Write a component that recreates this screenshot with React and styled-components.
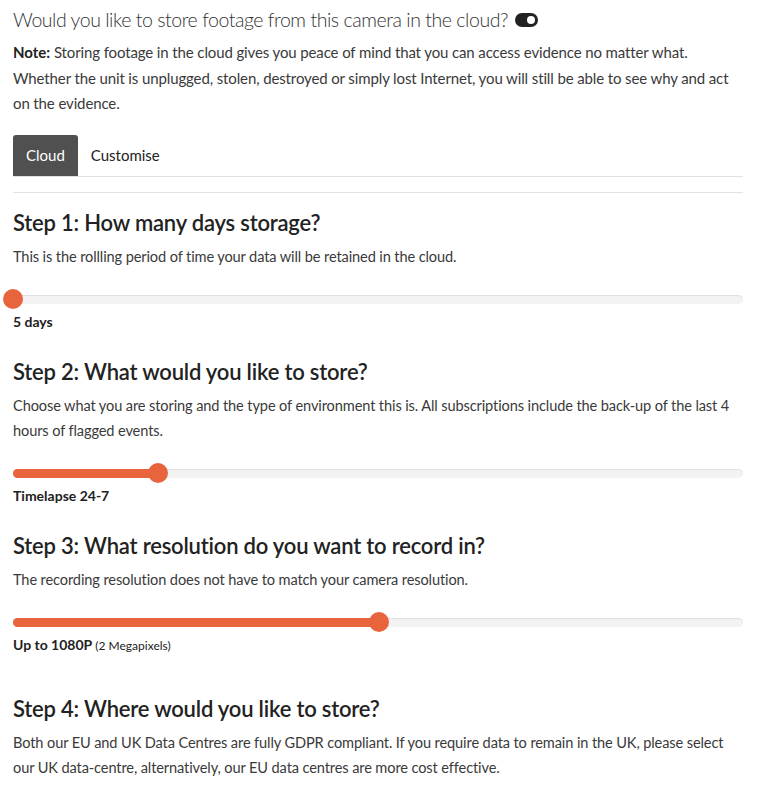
import React from 'react'
import styled, { createGlobalStyle } from 'styled-components'

const GlobalStyle = createGlobalStyle`
  body {
    margin: 0;
    background: #fff;
    font-family: "Lato", "Liberation Sans", sans-serif;
    color: #333;
  }
  * { box-sizing: border-box; }
`

const steps = [
  {
    title: 'Step 1: How many days storage?',
    text: 'This is the rollling period of time your data will be retained in the cloud.',
    value: 0,
    label: '5 days',
  },
  {
    title: 'Step 2: What would you like to store?',
    text: 'Choose what you are storing and the type of environment this is. All subscriptions include the back-up of the last 4 hours of flagged events.',
    value: 19.9,
    label: 'Timelapse 24-7',
  },
  {
    title: 'Step 3: What resolution do you want to record in?',
    text: 'The recording resolution does not have to match your camera resolution.',
    value: 50.1,
    label: 'Up to 1080P',
    small: '(2 Megapixels)',
  },
]

function App() {
    return (
        <Page>
            <GlobalStyle />
            <Question>
                Would you like to store footage from this camera in the cloud?
                <Toggle />
            </Question>
            <Note>
                <b>Note:</b>{' '}Storing footage in the cloud gives you peace of mind that you can access evidence no matter what.
                Whether the unit is unplugged, stolen, destroyed or simply lost Internet, you will still be able to see why and act
                on the evidence.
            </Note>
            <Tabs>
                <Tab active>Cloud</Tab>
                <Tab>Customise</Tab>
            </Tabs>
            <Divider />
            {steps.map((s, i) => (
                <Step key={s.title} first={i === 0}>
                    <StepTitle>{s.title}</StepTitle>
                    <StepText>{s.text}</StepText>
                    <Slider>
                        <Fill style={{ width: `${s.value}%` }} />
                        <Thumb style={{ left: `${s.value}%` }} />
                    </Slider>
                    <Value>
                        {s.label}
                        {s.small && <small> {s.small}</small>}
                    </Value>
                </Step>
            ))}
            <Step last>
                <StepTitle>Step 4: Where would you like to store?</StepTitle>
                <StepText>
                    Both our EU and UK Data Centres are fully GDPR compliant. If you require data to remain in the UK, please select
                    our UK data-centre, alternatively, our EU data centres are more cost effective.
                </StepText>
            </Step>
        </Page>
    )
}

const Page = styled.div`
    width: 766px;
    height: 790px;
    overflow: hidden;
    padding: 6px 23px 0 13px;
`

const Question = styled.h2`
    margin: 0;
    font-size: 19.5px;
    letter-spacing: -0.45px;
    font-weight: 300;
    line-height: 28px;
    color: #333;
    display: flex;
    align-items: center;
    gap: 7px;
`

const Toggle = styled.span`
    display: inline-block;
    width: 23px;
    height: 14px;
    border-radius: 7px;
    background: #222;
    position: relative;
    &::after {
        content: '';
        position: absolute;
        right: 3px;
        top: 3px;
        width: 8px;
        height: 8px;
        border-radius: 50%;
        background: #fff;
    }
`

const Note = styled.p`
    margin: 6px 0 0;
    font-size: 15px;
    letter-spacing: -0.12px;
    line-height: 25.5px;
    font-weight: 400;
    color: #3a3a3a;
    b { font-weight: 700; color: #222; letter-spacing: 0; }
`

const Tabs = styled.div`
    display: flex;
    margin-top: 18px;
    border-bottom: 1px solid #dee2e6;
`

const Tab = styled.div`
    height: 41px;
    padding: 0 13px;
    display: flex;
    align-items: center;
    font-size: 15px;
    border-radius: 3px 3px 0 0;
    color: ${p => (p.active ? '#fff' : '#222')};
    background: ${p => (p.active ? '#505050' : 'transparent')};
`

const Divider = styled.hr`
    margin: 15px 0 0;
    border: 0;
    border-top: 1px solid #e3e3e3;
`

const Step = styled.section`
    margin-top: ${p => (p.first ? '14px' : p.last ? '40px' : '26px')};
`

const StepTitle = styled.h3`
    margin: 0;
    font-size: 22px;
    letter-spacing: -0.2px;
    font-weight: 600;
    line-height: 32px;
    color: #222;
`

const StepText = styled.p`
    margin: 5px 0 0;
    font-size: 14.6px;
    letter-spacing: -0.12px;
    line-height: 25px;
    color: #3a3a3a;
`

const Slider = styled.div`
    position: relative;
    margin: 26px 0 0;
    height: 9px;
    border-radius: 5px;
    background: #f3f3f3;
    box-shadow: inset 0 1px 1px rgba(0, 0, 0, 0.08);
`

const Fill = styled.div`
    height: 100%;
    border-radius: 5px;
    background: #e8643c;
`

const Thumb = styled.div`
    position: absolute;
    top: 50%;
    width: 20px;
    height: 20px;
    margin: -10px 0 0 -10px;
    border-radius: 50%;
    background: #e8643c;
`

const Value = styled.div`
    margin-top: 9px;
    font-size: 14px;
    font-weight: 700;
    color: #222;
    small {
        font-size: 12px;
        font-weight: 400;
    }
`

export default App
